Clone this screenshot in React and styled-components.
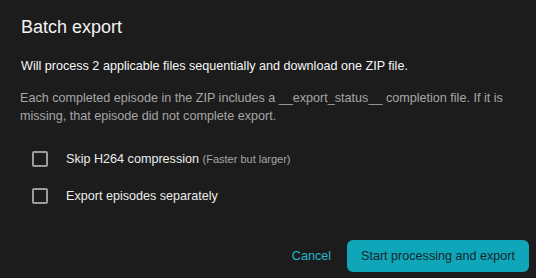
import React, { useState } from 'react';
import styled, { createGlobalStyle } from 'styled-components';

const GlobalStyle = createGlobalStyle`
  html, body {
    margin: 0;
    padding: 0;
    background: #1c1c1c;
  }
  body {
    font-family: "Liberation Sans", Arial, sans-serif;
    -webkit-font-smoothing: antialiased;
  }
`;

const Dialog = styled.div`
  box-sizing: border-box;
  width: 536px;
  height: 278px;
  background: #1c1c1c;
  color: #ececec;
  display: flex;
  flex-direction: column;
`;

const Title = styled.h2`
  margin: 0;
  padding: 16px 21px 0;
  font-size: 18px;
  font-weight: 400;
  line-height: 22px;
  color: #f2f2f2;
`;

const Body = styled.div`
  padding: 0 21px 0 20px;
  display: flex;
  flex-direction: column;
`;

const Lead = styled.p`
  margin: 19px 0 0 1px;
  font-size: 12.6px;
  line-height: 18px;
  font-weight: 500;
  color: #f7f7f7;
`;

const Note = styled.p`
  margin: 14px 0 0;
  font-size: 12.6px;
  line-height: 18px;
  color: #a6a6a6;
`;

const Options = styled.div`
  margin-top: 26px;
  padding-left: 12px;
  display: flex;
  flex-direction: column;
  gap: 21px;
`;

const Option = styled.label`
  display: flex;
  align-items: center;
  gap: 18px;
  height: 16px;
  line-height: 16px;
  cursor: pointer;
  font-size: 12.6px;
  color: #ececec;
`;

const Box = styled.span`
  box-sizing: border-box;
  width: 16px;
  height: 16px;
  border: 2px solid ${p => (p.$checked ? '#12a6b8' : '#9c9c9c')};
  background: ${p => (p.$checked ? '#12a6b8' : 'transparent')};
  border-radius: 2px;
  flex: none;
  display: flex;
  align-items: center;
  justify-content: center;
`;

const Hint = styled.span`
  font-size: 11px;
  color: #a6a6a6;
`;

const Actions = styled.div`
  margin-top: auto;
  padding: 0 7px 6px 0;
  display: flex;
  justify-content: flex-end;
  align-items: center;
  gap: 16px;
`;

const Button = styled.button`
  font-family: inherit;
  font-size: 12.6px;
  border: none;
  cursor: pointer;
  border-radius: 6px;
  height: 32px;
  padding: 0 ${p => (p.$primary ? '14px' : '0')};
  background: ${p => (p.$primary ? '#0fa6b9' : 'transparent')};
  color: ${p => (p.$primary ? '#15262b' : '#25b7ca')};
`;

function Check({ checked, onChange, children }) {
  return (
    <Option onClick={onChange}>
      <Box $checked={checked}>
        {checked && (
          <svg width="12" height="12" viewBox="0 0 24 24" fill="none" stroke="#1c1c1c" strokeWidth="4">
            <path d="M4 12l5 5L20 6" />
          </svg>
        )}
      </Box>
      <span>{children}</span>
    </Option>
  );
}

export default function App() {
  const [skip, setSkip] = useState(false);
  const [separate, setSeparate] = useState(false);

  return (
    <>
      <GlobalStyle />
      <Dialog>
        <Title>Batch export</Title>
        <Body>
          <Lead>Will process 2 applicable files sequentially and download one ZIP file.</Lead>
          <Note>
            Each completed episode in the ZIP includes a __export_status__ completion file. If it is
            missing, that episode did not complete export.
          </Note>
          <Options>
            <Check checked={skip} onChange={() => setSkip(!skip)}>
              Skip H264 compression <Hint>(Faster but larger)</Hint>
            </Check>
            <Check checked={separate} onChange={() => setSeparate(!separate)}>
              Export episodes separately
            </Check>
          </Options>
        </Body>
        <Actions>
          <Button>Cancel</Button>
          <Button $primary>Start processing and export</Button>
        </Actions>
      </Dialog>
    </>
  );
}
